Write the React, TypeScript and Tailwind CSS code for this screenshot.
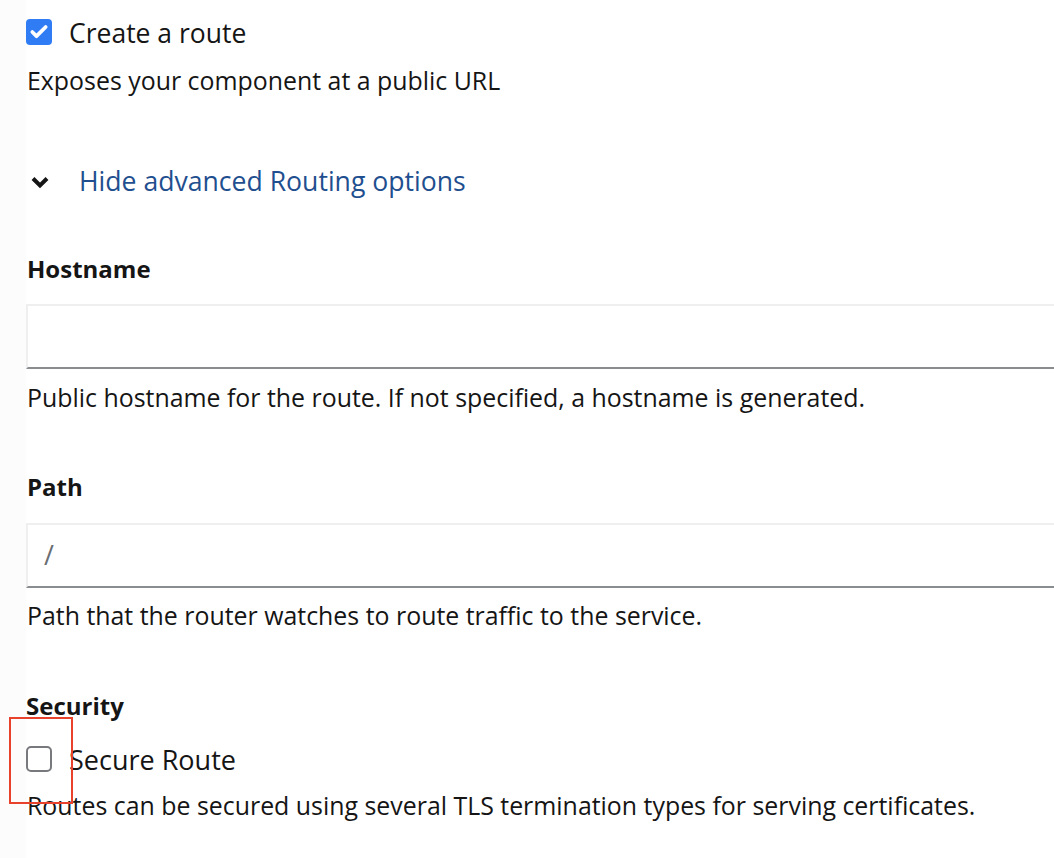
import { Check } from 'lucide-react'

// Scaled-up PatternFly style form section: route creation with advanced options.

function Chevron(): JSX.Element {
  return (
    <svg width="18" height="14" viewBox="0 0 18 14" className="shrink-0">
      <polyline points="2,3.5 9,10.5 16,3.5" fill="none" stroke="#151515" strokeWidth="4" />
    </svg>
  )
}

function HelpText({ children, className = '' }: { children: string; className?: string }): JSX.Element {
  return <p className={`h-[36px] leading-[36px] text-[24.9px] text-[#151515] ${className}`}>{children}</p>
}

function Label({ children, className = '' }: { children: string; className?: string }): JSX.Element {
  return <div className={`h-[36px] leading-[36px] text-[24px] font-bold text-[#151515] ${className}`}>{children}</div>
}

function TextBox({ value, className = '' }: { value?: string; className?: string }): JSX.Element {
  return (
    <div
      className={`h-[65px] -mr-[20px] flex items-center border-t-2 border-l-2 border-b-2 border-t-[#efefef] border-l-[#efefef] border-b-[#8a8d90] bg-white pl-[16px] ${className}`}
    >
      <span className="text-[27px] text-[#6a6e73]">{value ?? ''}</span>
    </div>
  )
}

export default function App(): JSX.Element {
  return (
    <div
      className="relative flex min-h-[858px] w-[1054px] overflow-hidden bg-white"
      style={{ fontFamily: '"Open Sans", "Noto Sans", sans-serif' }}
    >
      <div className="w-[26px] shrink-0 bg-[#fcfcfc]" />
      <div className="flex min-w-0 flex-1 flex-col">
        {/* Create a route */}
        <div className="mt-[17px] flex h-[30px] items-center">
          <span className="flex h-[26px] w-[26px] items-center justify-center rounded-[4px] bg-[#2f7cf5]">
            <Check className="h-[20px] w-[20px] text-white" strokeWidth={4.5} />
          </span>
          <span className="ml-[17px] mt-[3px] text-[26.5px] text-[#151515]">Create a route</span>
        </div>
        <HelpText className="mt-[15px] pl-[1px]">Exposes your component at a public URL</HelpText>

        {/* Advanced options toggle */}
        <div className="mt-[66px] flex h-[36px] items-center pl-[5px]">
          <Chevron />
          <span className="ml-[30px] text-[26.6px] text-[#1f4f8f]">Hide advanced Routing options</span>
        </div>

        <Label className="mt-[51px] pl-[1px]">Hostname</Label>
        <TextBox className="mt-[17px]" />
        <HelpText className="mt-[10px] pl-[1px]">
          Public hostname for the route. If not specified, a hostname is generated.
        </HelpText>

        <Label className="mt-[54px] pl-[1px]">Path</Label>
        <TextBox value="/" className="mt-[18px]" />
        <HelpText className="mt-[9px] pl-[1px]">Path that the router watches to route traffic to the service.</HelpText>

        <Label className="mt-[55px]">Security</Label>
        <div className="mt-[20px] flex h-[30px] items-center">
          <span className="h-[26px] w-[26px] rounded-[5px] border-2 border-[#77797c] bg-white" />
          <span className="ml-[17px] mt-[3px] text-[27px] text-[#151515]">Secure Route</span>
        </div>
        <HelpText className="mt-[13px] pl-[1px]">
          Routes can be secured using several TLS termination types for serving certificates.
        </HelpText>
      </div>

      {/* annotation box drawn over the checkbox */}
      <div className="pointer-events-none absolute left-[9px] top-[717px] h-[87px] w-[64px] border-2 border-[#e8412c]" />
    </div>
  )
}
